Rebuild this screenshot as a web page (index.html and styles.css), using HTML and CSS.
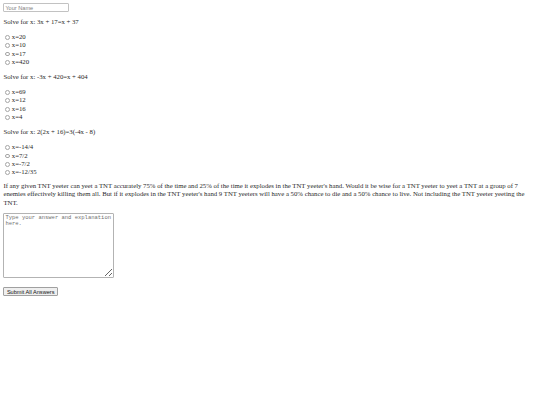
FILE: index.html
```html
<!DOCTYPE html>
<html>
<head>
<meta charset="utf-8">
<link rel="stylesheet" href="styles.css">
</head>
<body>
<form class="quiz">
<input type="text" class="name" placeholder="Your Name">
<p class="question first">Solve for x: 3x + 17=x + 37</p>
<div class="options">
<label class="option"><span class="radio"></span>x=20</label>
<label class="option"><span class="radio"></span>x=10</label>
<label class="option"><span class="radio"></span>x=17</label>
<label class="option"><span class="radio"></span>x=420</label>
</div>
<p class="question">Solve for x: -3x + 420=x + 404</p>
<div class="options">
<label class="option"><span class="radio"></span>x=69</label>
<label class="option"><span class="radio"></span>x=12</label>
<label class="option"><span class="radio"></span>x=16</label>
<label class="option"><span class="radio"></span>x=4</label>
</div>
<p class="question">Solve for x: 2(2x + 16)=3(-4x - 8)</p>
<div class="options">
<label class="option"><span class="radio"></span>x=-14/4</label>
<label class="option"><span class="radio"></span>x=7/2</label>
<label class="option"><span class="radio"></span>x=-7/2</label>
<label class="option"><span class="radio"></span>x=-12/35</label>
</div>
<p class="story">If any given TNT yeeter can yeet a TNT accurately 75% of the time and 25% of the time it explodes in the TNT yeeter's hand. Would it be wise for a TNT yeeter to yeet a TNT at a group of 7 enemies effectively killing them all. But if it explodes in the TNT yeeter's hand 9 TNT yeeters will have a 50% chance to die and a 50% chance to live. Not including the TNT yeeter yeeting the TNT.</p>
<textarea class="answer" placeholder="Type your answer and explanation here."></textarea>
<button type="button" class="submit">Submit All Answers</button>
</form>
</body>
</html>
```
FILE: styles.css
```css
html {
  background: #fff;
}
body {
  margin: 3.3px 3.4px;
  font-family: "Liberation Serif", "Times New Roman", serif;
  font-size: 6.75px;
  line-height: 8.4px;
  color: #2a2a2a;
}
.quiz {
  display: flex;
  flex-direction: column;
  align-items: flex-start;
}
.name {
  box-sizing: border-box;
  width: 66px;
  height: 9px;
  margin: 0;
  padding: 0 1px;
  border: 1px solid #c2c2c2;
  border-radius: 1px;
  font-family: "Liberation Sans", Arial, sans-serif;
  font-size: 5.6px;
  outline: none;
}
.name::placeholder {
  color: #808080;
}
.question {
  margin: 6.6px 0 0;
}
.question.first {
  margin-top: 5.5px;
}
.options {
  margin-top: 6.6px;
  display: flex;
  flex-direction: column;
}
.option {
  display: flex;
  align-items: center;
  height: 8.4px;
}
.radio {
  box-sizing: border-box;
  width: 4.8px;
  height: 4.8px;
  margin: 0.6px 1.6px 0 2px;
  border: 0.6px solid #a5a5a5;
  border-radius: 50%;
  background: #fff;
}
.story {
  margin: 5.2px 0 0;
}
.answer {
  box-sizing: border-box;
  width: 110.7px;
  height: 65px;
  margin: 5.8px 0 0;
  padding: 1px;
  border: 1px solid #b3b3b3;
  border-radius: 1px;
  font-family: "Liberation Mono", "DejaVu Sans Mono", monospace;
  font-size: 5.5px;
  line-height: 6.4px;
  resize: both;
  outline: none;
}
.answer::placeholder {
  color: #707070;
}
.submit {
  box-sizing: border-box;
  width: 54.6px;
  height: 8.4px;
  margin: 9.6px 0 0;
  padding: 0;
  border: 1px solid #a0a0a0;
  border-radius: 1px;
  background: #efefef;
  font-family: "Liberation Sans", Arial, sans-serif;
  font-size: 5.6px;
  line-height: 6px;
  color: #111;
}
```
